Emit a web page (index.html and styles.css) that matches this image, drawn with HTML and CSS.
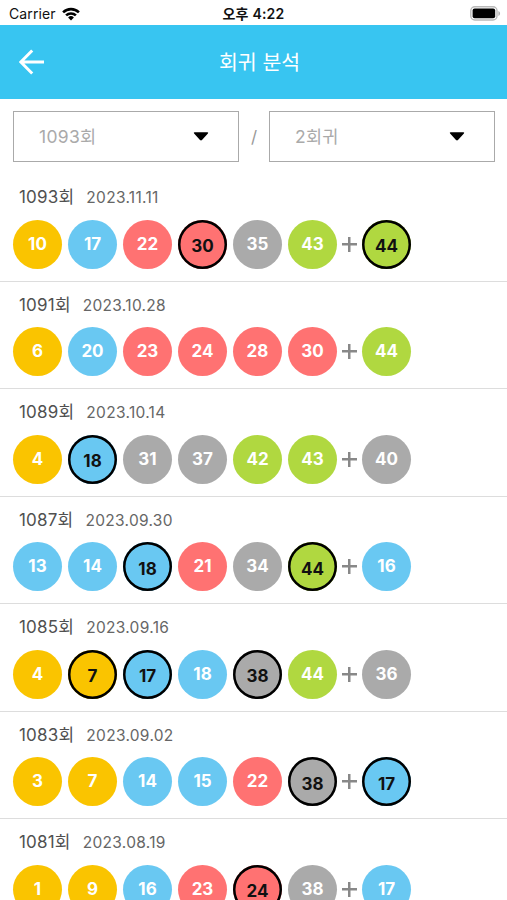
FILE: index.html
```
<!DOCTYPE html>
<html lang="ko">
<head>
    <meta charset="UTF-8">
    <meta name="viewport" content="width=device-width, initial-scale=1.0">
    <title>회귀 분석</title>
    <link rel="stylesheet" href="styles.css">
</head>
<body>
    <div class="status-bar">
        <div class="carrier">
            <span>Carrier</span>
            <svg class="wifi" viewBox="0 0 18 14">
                <path d="M0.2 4.4a12.6 12.6 0 0 1 17.6 0L16 6.3a10 10 0 0 0-14 0z"/>
                <path d="M3.2 7.5a8.4 8.4 0 0 1 11.6 0L13 9.3a5.8 5.8 0 0 0-8 0z"/>
                <path d="M6.1 10.4a4.2 4.2 0 0 1 5.8 0L9 13.5z"/>
            </svg>
        </div>
        <div class="time">오후 4:22</div>
        <svg class="battery" viewBox="0 0 31 15">
            <rect x="0.8" y="0.8" width="26.2" height="13.2" rx="4" fill="#fff" stroke="#b9b9b9" stroke-width="1.4"/>
            <rect x="2.6" y="2.6" width="22.6" height="9.6" rx="2" fill="#000"/>
            <path d="M28.4 4.9c2.2 0.9 2.2 4.1 0 5z" fill="#b0b0b0"/>
        </svg>
    </div>

    <header class="header">
        <button class="back-btn">
            <svg viewBox="0 0 26 26">
                <path d="M25 13H2.5M13.2 1.5L1.8 13l11.4 11.5"/>
            </svg>
        </button>
        <h1 class="title">회귀 분석</h1>
    </header>

    <div class="filters">
        <div class="select">
            <span>1093회</span>
            <svg class="arrow" viewBox="0 0 16 9"><path d="M1.5 0.3h13q1.3 0.3 0.4 1.3L9 8q-1 0.9-2 0L1.1 1.6q-0.9-1 0.4-1.3z"/></svg>
        </div>
        <span class="slash">/</span>
        <div class="select">
            <span>2회귀</span>
            <svg class="arrow" viewBox="0 0 16 9"><path d="M1.5 0.3h13q1.3 0.3 0.4 1.3L9 8q-1 0.9-2 0L1.1 1.6q-0.9-1 0.4-1.3z"/></svg>
        </div>
    </div>

    <div class="draw-list">
        <div class="draw">
            <div class="draw-info"><span class="round">1093회</span><span class="date">2023.11.11</span></div>
            <div class="balls">
                <span class="ball yellow">10</span>
                <span class="ball blue">17</span>
                <span class="ball red">22</span>
                <span class="ball red hit">30</span>
                <span class="ball gray">35</span>
                <span class="ball green">43</span>
                <span class="plus"></span>
                <span class="ball green hit">44</span>
            </div>
        </div>
        <div class="draw">
            <div class="draw-info"><span class="round">1091회</span><span class="date">2023.10.28</span></div>
            <div class="balls">
                <span class="ball yellow">6</span>
                <span class="ball blue">20</span>
                <span class="ball red">23</span>
                <span class="ball red">24</span>
                <span class="ball red">28</span>
                <span class="ball red">30</span>
                <span class="plus"></span>
                <span class="ball green">44</span>
            </div>
        </div>
        <div class="draw">
            <div class="draw-info"><span class="round">1089회</span><span class="date">2023.10.14</span></div>
            <div class="balls">
                <span class="ball yellow">4</span>
                <span class="ball blue hit">18</span>
                <span class="ball gray">31</span>
                <span class="ball gray">37</span>
                <span class="ball green">42</span>
                <span class="ball green">43</span>
                <span class="plus"></span>
                <span class="ball gray">40</span>
            </div>
        </div>
        <div class="draw">
            <div class="draw-info"><span class="round">1087회</span><span class="date">2023.09.30</span></div>
            <div class="balls">
                <span class="ball blue">13</span>
                <span class="ball blue">14</span>
                <span class="ball blue hit">18</span>
                <span class="ball red">21</span>
                <span class="ball gray">34</span>
                <span class="ball green hit">44</span>
                <span class="plus"></span>
                <span class="ball blue">16</span>
            </div>
        </div>
        <div class="draw">
            <div class="draw-info"><span class="round">1085회</span><span class="date">2023.09.16</span></div>
            <div class="balls">
                <span class="ball yellow">4</span>
                <span class="ball yellow hit">7</span>
                <span class="ball blue hit">17</span>
                <span class="ball blue">18</span>
                <span class="ball gray hit">38</span>
                <span class="ball green">44</span>
                <span class="plus"></span>
                <span class="ball gray">36</span>
            </div>
        </div>
        <div class="draw">
            <div class="draw-info"><span class="round">1083회</span><span class="date">2023.09.02</span></div>
            <div class="balls">
                <span class="ball yellow">3</span>
                <span class="ball yellow">7</span>
                <span class="ball blue">14</span>
                <span class="ball blue">15</span>
                <span class="ball red">22</span>
                <span class="ball gray hit">38</span>
                <span class="plus"></span>
                <span class="ball blue hit">17</span>
            </div>
        </div>
        <div class="draw">
            <div class="draw-info"><span class="round">1081회</span><span class="date">2023.08.19</span></div>
            <div class="balls">
                <span class="ball yellow">1</span>
                <span class="ball yellow">9</span>
                <span class="ball blue">16</span>
                <span class="ball red">23</span>
                <span class="ball red hit">24</span>
                <span class="ball gray">38</span>
                <span class="plus"></span>
                <span class="ball blue">17</span>
            </div>
        </div>
    </div>
</body>
</html>
```
FILE: styles.css
```
* {
    box-sizing: border-box;
    margin: 0;
    padding: 0;
}

body {
    font-family: Inter, 'Noto Sans CJK KR', sans-serif;
    height: 100vh;
    overflow: hidden;
    background-color: #fff;
    color: #505050;
}

.status-bar {
    display: grid;
    grid-template-columns: 1fr auto 1fr;
    align-items: center;
    height: 25px;
    padding: 2px 6px 0 9px;
    color: #111;
}

.carrier {
    display: flex;
    align-items: center;
    gap: 6px;
    font-size: 14px;
    line-height: 20px;
    letter-spacing: 0.1px;
}

.wifi {
    width: 18px;
    height: 14px;
}

.time {
    padding-right: 3px;
    font-size: 14px;
    font-weight: 600;
    line-height: 20px;
    letter-spacing: 0.2px;
}

.battery {
    width: 31px;
    height: 15px;
    justify-self: end;
}

.header {
    display: grid;
    grid-template-columns: 26px 1fr 14px;
    align-items: center;
    height: 74px;
    padding: 0 19px;
    background-color: #38c5f1;
}

.back-btn {
    width: 26px;
    height: 26px;
    border: none;
    background: none;
    cursor: pointer;
}

.back-btn svg {
    display: block;
    width: 26px;
    height: 26px;
    fill: none;
    stroke: #fff;
    stroke-width: 3;
}

.title {
    padding-top: 1px;
    color: #fff;
    font-size: 20.5px;
    font-weight: 400;
    line-height: 30px;
    text-align: center;
}

.filters {
    display: flex;
    align-items: center;
    height: 75px;
    padding: 0 12px 0 13px;
}

.select {
    display: flex;
    flex: 1;
    align-items: center;
    justify-content: space-between;
    height: 51px;
    padding: 0 29px 0 25px;
    border: 1px solid #aaa;
    color: #aaa;
    font-size: 17.5px;
    line-height: 26px;
    letter-spacing: 0.3px;
}

.arrow {
    width: 16px;
    height: 9px;
}

.slash {
    width: 30px;
    color: #999;
    font-size: 17px;
    text-align: center;
}

.draw {
    height: 107.5px;
    padding: 10px 13px 0;
    border-bottom: 1px solid #ddd;
}

.draw-info {
    display: flex;
    align-items: baseline;
    gap: 12px;
    height: 35.5px;
    padding-left: 6px;
    line-height: 26px;
}

.round {
    font-size: 17px;
    letter-spacing: 0.2px;
}

.date {
    color: #666;
    font-size: 15.5px;
    letter-spacing: 0.3px;
}

.balls {
    display: flex;
    align-items: center;
    gap: 6px;
}

.ball {
    width: 49px;
    height: 49px;
    border-radius: 50%;
    color: #fff;
    font-size: 17px;
    font-weight: 700;
    line-height: 49px;
    text-align: center;
}

.yellow {
    background-color: #fac400;
}

.blue {
    background-color: #69c8f2;
}

.red {
    background-color: #ff7272;
}

.gray {
    background-color: #aaa;
}

.green {
    background-color: #b0d840;
}

.hit {
    padding-top: 2.5px;
    box-shadow: inset 0 0 0 2.5px #000;
    color: #111;
}

.plus {
    width: 15px;
    height: 15px;
    margin: 0 -1px;
    background: linear-gradient(#888, #888) center / 100% 2.5px no-repeat,
                linear-gradient(#888, #888) center / 2.5px 100% no-repeat;
}
```
